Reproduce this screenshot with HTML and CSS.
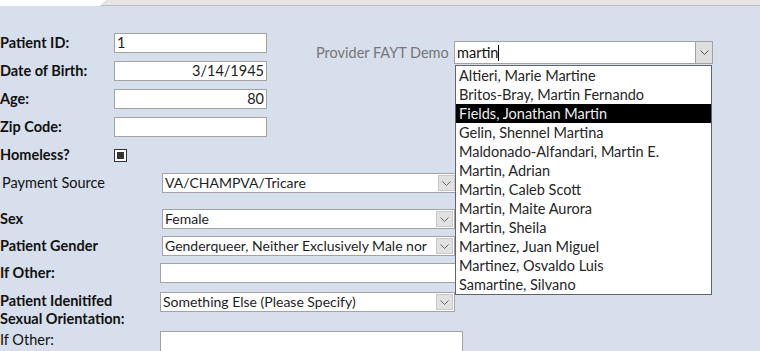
FILE: index.html
```html
<!DOCTYPE html>
<html lang="en">
<head>
    <meta charset="UTF-8">
    <title>Patient Demographics</title>
    <link rel="stylesheet" href="styles.css">
</head>
<body>
    <div class="tab-strip">
        <div class="tab"></div>
    </div>

    <div class="content">
        <div class="top-row">
            <div class="form-top">
                <label class="lbl bold">Patient ID:</label>
                <div class="box">1</div>
                <label class="lbl bold">Date of Birth:</label>
                <div class="box right">3/14/1945</div>
                <label class="lbl bold">Age:</label>
                <div class="box right">80</div>
                <label class="lbl bold">Zip Code:</label>
                <div class="box"></div>
                <label class="lbl bold">Homeless?</label>
                <div class="check"><span></span></div>
            </div>

            <div class="provider">
                <span class="provider-label">Provider FAYT Demo</span>
                <div class="combo">
                    <div class="combo-text">martin<span class="caret"></span></div>
                    <div class="combo-btn">
                        <svg width="9" height="5" viewBox="0 0 9 5"><polyline points="0.5,0.5 4.5,4.5 8.5,0.5" fill="none" stroke="#555" stroke-width="1"/></svg>
                    </div>
                    <ul class="list">
                        <li>Altieri, Marie Martine</li>
                        <li>Britos-Bray, Martin Fernando</li>
                        <li class="active">Fields, Jonathan Martin</li>
                        <li>Gelin, Shennel Martina</li>
                        <li>Maldonado-Alfandari, Martin E.</li>
                        <li>Martin, Adrian</li>
                        <li>Martin, Caleb Scott</li>
                        <li>Martin, Maite Aurora</li>
                        <li>Martin, Sheila</li>
                        <li>Martinez, Juan Miguel</li>
                        <li>Martinez, Osvaldo Luis</li>
                        <li>Samartine, Silvano</li>
                    </ul>
                </div>
            </div>
        </div>

        <div class="form-bottom">
            <div class="row row-payment">
                <label class="lbl indent">Payment Source</label>
                <div class="select">
                    <span class="select-text">VA/CHAMPVA/Tricare</span>
                    <span class="arrow"><svg width="9" height="5" viewBox="0 0 9 5"><polyline points="0.5,0.5 4.5,4.5 8.5,0.5" fill="none" stroke="#666" stroke-width="1"/></svg></span>
                </div>
            </div>
            <div class="row row-sex">
                <label class="lbl bold">Sex</label>
                <div class="select nudge">
                    <span class="select-text">Female</span>
                    <span class="arrow"><svg width="9" height="5" viewBox="0 0 9 5"><polyline points="0.5,0.5 4.5,4.5 8.5,0.5" fill="none" stroke="#666" stroke-width="1"/></svg></span>
                </div>
            </div>
            <div class="row row-tight">
                <label class="lbl bold">Patient Gender</label>
                <div class="select nudge">
                    <span class="select-text">Genderqueer, Neither Exclusively Male nor</span>
                    <span class="arrow"><svg width="9" height="5" viewBox="0 0 9 5"><polyline points="0.5,0.5 4.5,4.5 8.5,0.5" fill="none" stroke="#666" stroke-width="1"/></svg></span>
                </div>
            </div>
            <div class="row row-tight">
                <label class="lbl bold">If Other:</label>
                <div class="box wide"></div>
            </div>
            <div class="row row-orient">
                <label class="lbl bold two-line">Patient Idenitifed<br>Sexual Orientation:</label>
                <div class="select">
                    <span class="select-text">Something Else (Please Specify)</span>
                    <span class="arrow"><svg width="9" height="5" viewBox="0 0 9 5"><polyline points="0.5,0.5 4.5,4.5 8.5,0.5" fill="none" stroke="#666" stroke-width="1"/></svg></span>
                </div>
            </div>
            <div class="row row-last">
                <label class="lbl two-line">If Other:</label>
                <div class="box wider"></div>
            </div>
        </div>
    </div>
</body>
</html>
```

FILE: styles.css
```css
body {
    margin: 0;
    background-color: #d6dfeb;
    font-family: Lato, "Liberation Sans", sans-serif;
    font-size: 14.5px;
    color: #1e1e1e;
    overflow: hidden;
}
.tab-strip {
    height: 5px;
    background-color: #e6e3e1;
    border-bottom: 1px solid #bdbdc6;
    position: relative;
}
.tab {
    width: 100px;
    height: 6px;
    background-color: #fff;
    position: relative;
}
.tab::after {
    content: "";
    position: absolute;
    left: 100px;
    top: 0;
    border-top: 6px solid #fff;
    border-right: 6px solid transparent;
}
.content {
    padding-top: 27px;
}
.top-row {
    display: flex;
    align-items: flex-start;
}
.form-top {
    display: grid;
    grid-template-columns: 114px 153px;
    grid-auto-rows: 20px;
    row-gap: 8px;
    align-items: center;
    width: 316px;
}
.lbl {
    line-height: 20px;
    color: #111;
    white-space: nowrap;
}
.bold {
    font-weight: bold;
}
.indent {
    padding-left: 2px;
}
.box {
    height: 18px;
    line-height: 18px;
    background: #fff;
    border: 1px solid #a3a3a3;
    padding: 0 2px;
    color: #1e1e1e;
}
.box.right {
    text-align: right;
}
.check {
    width: 11px;
    height: 11px;
    border: 1px solid #333;
    background: #fff;
    display: flex;
    align-items: center;
    justify-content: center;
}
.check span {
    width: 7px;
    height: 7px;
    background: #333;
}

.provider {
    display: flex;
    align-items: center;
    margin-top: 8px;
}
.provider-label {
    color: #767676;
    width: 138px;
}
.combo {
    position: relative;
    display: flex;
    width: 257px;
    height: 21px;
    background: #fff;
    border: 1px solid #a3a3a3;
}
.combo-text {
    flex: 1;
    line-height: 21px;
    padding-left: 2px;
    color: #111;
}
.caret {
    display: inline-block;
    width: 1px;
    height: 16px;
    background: #000;
    vertical-align: -3px;
}
.combo-btn {
    width: 16px;
    background: #dedede;
    border-left: 1px solid #a3a3a3;
    display: flex;
    align-items: center;
    justify-content: center;
}
.list {
    position: absolute;
    top: 23px;
    left: 0;
    width: 255px;
    margin: 0;
    padding: 0;
    list-style: none;
    background: #fff;
    border: 1px solid #646464;
}
.list li {
    height: 19px;
    line-height: 19px;
    padding-left: 3px;
    color: #262626;
    white-space: nowrap;
}
.list li.active {
    background: #000;
    color: #eee;
}

.form-bottom {
    display: flex;
    flex-direction: column;
}
.row {
    display: flex;
    align-items: center;
}
.row .lbl {
    width: 160px;
}
.row-payment {
    margin-top: 8px;
}
.row-sex {
    margin-top: 16px;
}
.row-tight {
    margin-top: 7px;
}
.row-orient {
    margin-top: 9px;
    align-items: flex-start;
}
.row-last {
    margin-top: 3px;
    align-items: flex-start;
}
.two-line {
    line-height: 18px;
}
.select {
    display: flex;
    width: 293px;
    height: 18px;
    background: #fff;
    border: 1px solid #a3a3a3;
}
.select.nudge {
    margin-left: 2px;
    width: 291px;
}
.select-text {
    flex: 1;
    font-size: 14px;
    line-height: 18px;
    padding-left: 2px;
    white-space: nowrap;
    overflow: hidden;
}
.arrow {
    width: 15px;
    margin: 1px;
    background: #e1e1e1;
    border: 1px solid #c8c8c8;
    display: flex;
    align-items: center;
    justify-content: center;
}
.box.wide {
    width: 291px;
}
.box.wider {
    width: 297px;
    height: 30px;
}
```
